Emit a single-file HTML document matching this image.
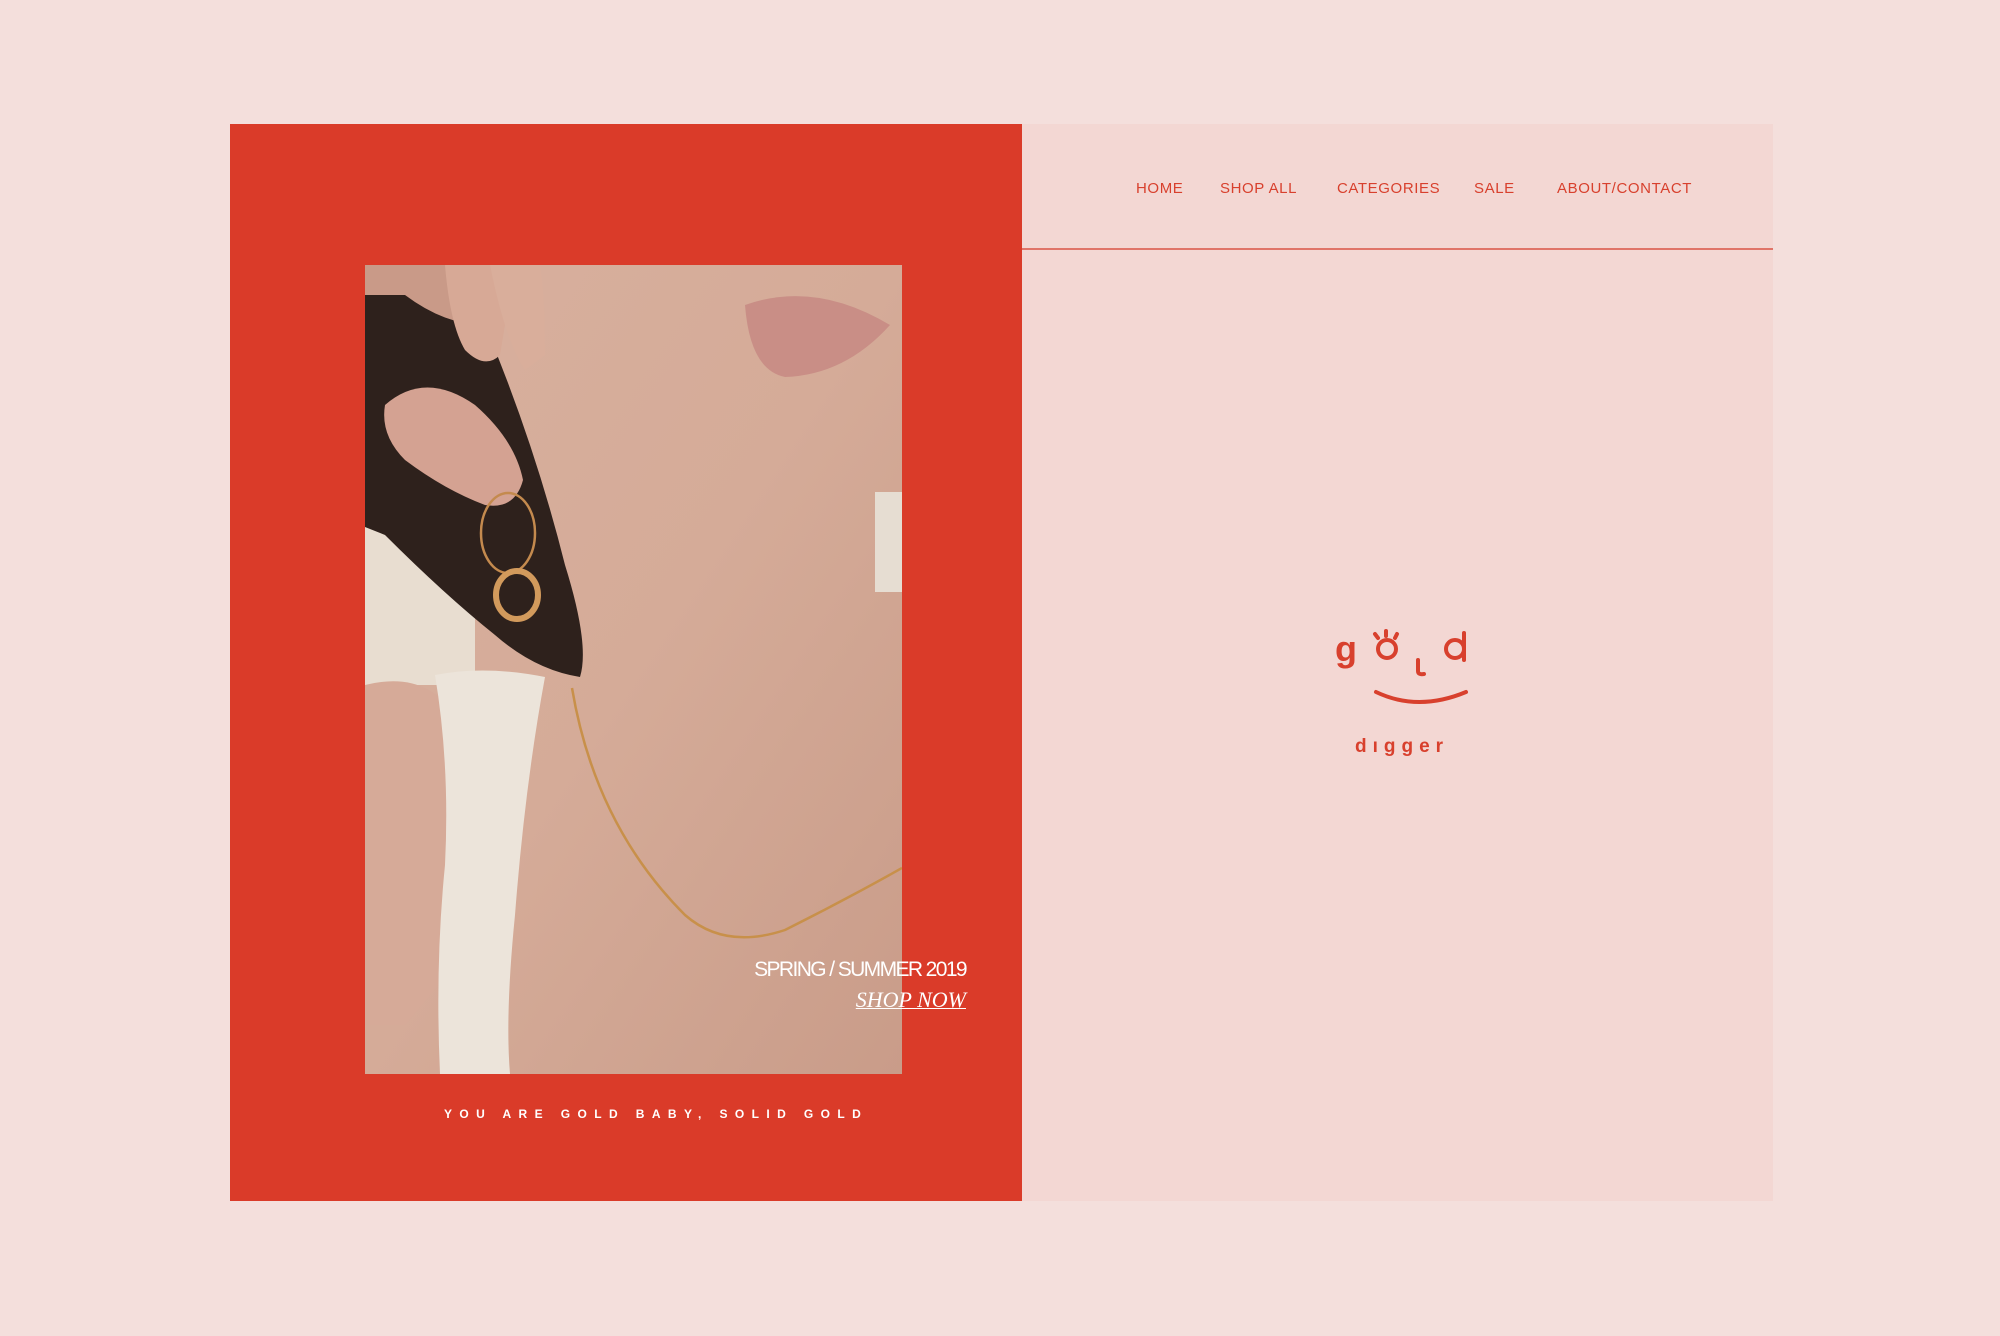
<!DOCTYPE html>
<html><head><meta charset="utf-8"><style>
html,body{margin:0;padding:0}
body{width:2000px;height:1336px;background:#f4dfdc;position:relative;overflow:hidden;font-family:"Liberation Sans",sans-serif}
.red{position:absolute;left:230px;top:124px;width:792px;height:1077px;background:#da3b29}
.right{position:absolute;left:1022px;top:124px;width:751px;height:1077px;background:#f3d7d3}
.line{position:absolute;left:1022px;top:248px;width:751px;height:2px;background:#e07468}
.nav{position:absolute;top:180px;font-size:15px;color:#d8402d;letter-spacing:0.6px}
.photo{position:absolute;left:365px;top:265px;width:537px;height:809px}
.ss{position:absolute;left:640px;width:326px;text-align:right;color:#fff}
.tag{position:absolute;left:444px;top:1107px;color:#fff;font-size:12px;font-weight:bold;letter-spacing:7.4px;white-space:nowrap}
</style></head><body>
<div class="red"></div>
<div class="right"></div>
<div class="line"></div>
<div class="nav" style="left:1136px">HOME</div>
<div class="nav" style="left:1220px">SHOP ALL</div>
<div class="nav" style="left:1337px">CATEGORIES</div>
<div class="nav" style="left:1474px">SALE</div>
<div class="nav" style="left:1557px">ABOUT/CONTACT</div>

<svg class="photo" viewBox="0 0 537 809" preserveAspectRatio="none">
<defs>
<linearGradient id="sk" x1="0" y1="0" x2="1" y2="1"><stop offset="0" stop-color="#d8b09e"/><stop offset="0.5" stop-color="#d5ab98"/><stop offset="1" stop-color="#c99c89"/></linearGradient>
</defs>
<rect width="537" height="809" fill="url(#sk)"/>
<rect x="0" y="220" width="110" height="200" fill="#e8ddd0"/>
<rect x="510" y="227" width="27" height="100" fill="#e6ddd2"/>
<path d="M0 30 Q60 20 120 60 Q170 180 200 300 Q225 380 215 412 Q170 405 130 370 Q80 330 20 270 L0 262Z" fill="#2e211c"/>
<path d="M0 0 L110 0 L140 30 L120 60 Q80 60 40 30 L0 30Z" fill="#c99a88"/>
<path d="M80 0 Q85 60 100 85 Q120 105 135 90 L150 0Z" fill="#d7a996"/>
<path d="M125 0 Q140 75 160 105 L180 90 Q180 30 175 0Z" fill="#d9ae9b"/>
<path d="M20 140 Q60 105 110 140 Q150 175 158 215 Q150 245 120 240 Q80 225 40 195 Q15 170 20 140Z" fill="#d4a292"/>
<path d="M0 420 Q60 405 90 450 L90 700 L40 760 L0 760Z" fill="#d6aa98"/>
<path d="M70 410 Q120 400 180 412 Q160 520 150 650 Q140 750 145 809 L75 809 Q70 700 80 600 Q85 500 70 410Z" fill="#ece4da"/>
<path d="M380 40 Q450 15 525 60 Q480 110 420 112 Q385 105 380 40Z" fill="#c98e86"/>
<ellipse cx="143" cy="268" rx="27" ry="40" fill="none" stroke="#c48a4e" stroke-width="2.5"/>
<ellipse cx="152" cy="330" rx="21" ry="24" fill="none" stroke="#d29a5c" stroke-width="6"/>
<path d="M207 423 Q230 560 320 650 Q360 685 420 665 Q480 635 537 603" fill="none" stroke="#c8904a" stroke-width="2.5"/>
</svg>

<div class="ss" style="top:958px;font-size:21px;letter-spacing:-1.6px">SPRING / SUMMER 2019</div>
<div class="ss" style="top:987px;font-family:'Liberation Serif',serif;font-style:italic;font-size:22px;text-decoration:underline;text-decoration-thickness:1px">SHOP NOW</div>
<div class="tag">YOU ARE GOLD BABY, SOLID GOLD</div>

<svg style="position:absolute;left:1300px;top:600px" width="200" height="170" viewBox="0 0 200 170">
<g fill="none" stroke="#d8402d" stroke-width="4" stroke-linecap="round">
<circle cx="87" cy="49" r="9"/>
<line x1="86" y1="31" x2="86" y2="36"/><line x1="75" y1="34" x2="78" y2="38"/><line x1="97" y1="34" x2="95" y2="38"/>
<path d="M118 60 L118 71 Q118 75 124 74"/>
<circle cx="155" cy="49" r="9"/><line x1="164" y1="33" x2="164" y2="60"/>
<path d="M76 92 Q118 112 166 92"/>
</g>
<text x="35" y="61" font-family="'Liberation Sans',sans-serif" font-size="36" font-weight="bold" fill="#d8402d">g</text>
<text x="55" y="152" font-family="'Liberation Sans',sans-serif" font-size="19" font-weight="bold" fill="#d8402d" letter-spacing="6">dıgger</text>
</svg>
</body></html>
